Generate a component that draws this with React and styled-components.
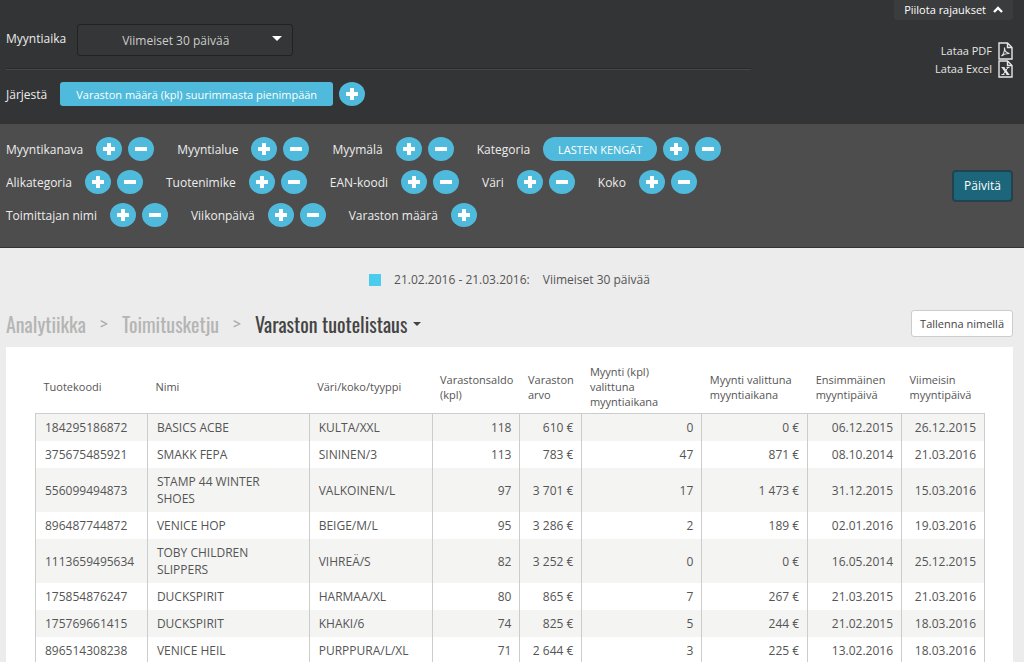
import React from "react";
import styled, { createGlobalStyle, css } from "styled-components";

const sortField = "Varaston määrä (kpl) suurimmasta pienimpään";

const filterRows = [
  [
    { name: "Myyntikanava" },
    { name: "Myyntialue" },
    { name: "Myymälä" },
    { name: "Kategoria", value: "LASTEN KENGÄT" },
  ],
  [
    { name: "Alikategoria" },
    { name: "Tuotenimike" },
    { name: "EAN-koodi" },
    { name: "Väri" },
    { name: "Koko" },
  ],
  [
    { name: "Toimittajan nimi" },
    { name: "Viikonpäivä" },
    { name: "Varaston määrä", addOnly: true },
  ],
];

const columns = [
  { title: "Tuotekoodi", width: 112 },
  { title: "Nimi", width: 162 },
  { title: "Väri/koko/tyyppi", width: 123 },
  { title: "Varastonsaldo (kpl)", width: 88, right: true },
  { title: "Varaston arvo", width: 62, right: true },
  { title: "Myynti (kpl) valittuna myyntiaikana", width: 120, right: true },
  { title: "Myynti valittuna myyntiaikana", width: 106, right: true },
  { title: "Ensimmäinen myyntipäivä", width: 94, right: true },
  { title: "Viimeisin myyntipäivä", width: 83, right: true },
];

const totalWidth = columns.reduce((sum, col) => sum + col.width, 0);

const products = [
  ["184295186872", "BASICS ACBE", "KULTA/XXL", "118", "610 €", "0", "0 €", "06.12.2015", "26.12.2015"],
  ["375675485921", "SMAKK FEPA", "SININEN/3", "113", "783 €", "47", "871 €", "08.10.2014", "21.03.2016"],
  ["556099494873", "STAMP 44 WINTER SHOES", "VALKOINEN/L", "97", "3 701 €", "17", "1 473 €", "31.12.2015", "15.03.2016"],
  ["896487744872", "VENICE HOP", "BEIGE/M/L", "95", "3 286 €", "2", "189 €", "02.01.2016", "19.03.2016"],
  ["1113659495634", "TOBY CHILDREN SLIPPERS", "VIHREÄ/S", "82", "3 252 €", "0", "0 €", "16.05.2014", "25.12.2015"],
  ["175854876247", "DUCKSPIRIT", "HARMAA/XL", "80", "865 €", "7", "267 €", "21.03.2015", "21.03.2016"],
  ["175769661415", "DUCKSPIRIT", "KHAKI/6", "74", "825 €", "5", "244 €", "21.02.2015", "18.03.2016"],
  ["896514308238", "VENICE HEIL", "PURPPURA/L/XL", "71", "2 644 €", "3", "225 €", "13.02.2016", "18.03.2016"],
];

function PlusIcon() {
  return (
    <svg width="12" height="12" viewBox="0 0 12 12" fill="#fff">
      <rect x="4" y="0" width="4" height="12" rx="0.5" />
      <rect x="0" y="4" width="12" height="4" rx="0.5" />
    </svg>
  );
}

function MinusIcon() {
  return (
    <svg width="12" height="12" viewBox="0 0 12 12" fill="#fff">
      <rect x="0" y="4" width="12" height="4" rx="0.5" />
    </svg>
  );
}

function FileIcon({ children }) {
  return (
    <svg width="15" height="18" viewBox="0 0 15 18" fill="none" stroke="#e6e6e6" strokeWidth="1.4">
      <path d="M1 1h8.500L14 5.500V17H1z" />
      <path d="M9.500 1v4.500H14" />
      {children}
    </svg>
  );
}

function Filter({ name, value, addOnly }) {
  return (
    <FilterGroup role="group" aria-label={name}>
      <FilterName>{name}</FilterName>
      {value && <ValuePill type="button">{value}</ValuePill>}
      <RoundButton type="button" aria-label={"Lisää " + name}>
        <PlusIcon />
      </RoundButton>
      {!addOnly && (
        <RoundButton type="button" aria-label={"Poista " + name}>
          <MinusIcon />
        </RoundButton>
      )}
    </FilterGroup>
  );
}

function App() {
  return (
    <>
      <GlobalStyle />
      <TopPanel>
        <TopMain>
          <PeriodRow>
            <Label htmlFor="period">Myyntiaika</Label>
            <SelectWrap>
              <Select id="period" defaultValue="30">
                <option value="30">Viimeiset 30 päivää</option>
              </Select>
              <SelectArrow />
            </SelectWrap>
          </PeriodRow>
          <Divider />
          <SortRow>
            <FilterName>Järjestä</FilterName>
            <SortPill type="button">{sortField}</SortPill>
            <RoundButton type="button" aria-label="Lisää järjestys">
              <PlusIcon />
            </RoundButton>
          </SortRow>
        </TopMain>
        <TopSide>
          <HideButton type="button">
            Piilota rajaukset
            <svg width="10" height="7" viewBox="0 0 10 7" fill="none" stroke="#fff" strokeWidth="2.4">
              <path d="M1 6l4-4 4 4" />
            </svg>
          </HideButton>
          <Downloads>
            <DownloadLink href="#pdf">
              Lataa PDF
              <FileIcon>
                <path d="M3.500 14c1.500-1 3.500-4.500 3-8.500 0 3.500 2 5.500 5 6-3-.3-5.500.5-8 2.500z" strokeWidth="1.1" />
              </FileIcon>
            </DownloadLink>
            <DownloadLink href="#excel">
              Lataa Excel
              <FileIcon>
                <path d="M5 7.500l5 7" strokeWidth="2.200" />
                <path d="M10 7.500l-5 7M3.500 7.500h3M8.500 7.500h3M3.500 14.500h3M8.500 14.500h3" strokeWidth="1" />
              </FileIcon>
            </DownloadLink>
          </Downloads>
        </TopSide>
      </TopPanel>

      <FilterPanel>
        <FilterList>
          {filterRows.map((row) => (
            <FilterRow key={row[0].name}>
              {row.map((filter) => (
                <Filter key={filter.name} {...filter} />
              ))}
            </FilterRow>
          ))}
        </FilterList>
        <UpdateButton type="button">Päivitä</UpdateButton>
      </FilterPanel>

      <Content>
        <Legend>
          <Swatch />
          <span>21.02.2016 - 21.03.2016:</span>
          <span>Viimeiset 30 päivää</span>
        </Legend>

        <TitleBar>
          <Breadcrumb>
            <Crumb href="#analytiikka">Analytiikka</Crumb>
            <Separator>&gt;</Separator>
            <Crumb href="#toimitusketju">Toimitusketju</Crumb>
            <Separator>&gt;</Separator>
            <CurrentPage type="button">
              Varaston tuotelistaus
              <Caret />
            </CurrentPage>
          </Breadcrumb>
          <SaveButton type="button">Tallenna nimellä</SaveButton>
        </TitleBar>

        <Card>
          <Table>
            <colgroup>
              {columns.map((col) => (
                <col key={col.title} style={{ width: (col.width / totalWidth) * 100 + "%" }} />
              ))}
            </colgroup>
            <thead>
              <tr>
                {columns.map((col) => (
                  <Th key={col.title} scope="col">{col.title}</Th>
                ))}
              </tr>
            </thead>
            <tbody>
              {products.map((product) => (
                <Row key={product[0]}>
                  {product.map((value, i) => (
                    <Td key={columns[i].title} $right={columns[i].right}>{value}</Td>
                  ))}
                </Row>
              ))}
            </tbody>
          </Table>
        </Card>
      </Content>
    </>
  );
}

const GlobalStyle = createGlobalStyle`
  * {
    box-sizing: border-box;
  }
  body {
    margin: 0;
    background: #ececec;
    color: #555;
    font-family: "Open Sans", "Noto Sans", sans-serif;
    font-size: 12px;
    line-height: 18px;
  }
  button, select {
    font-family: inherit;
    cursor: pointer;
  }
`;

const TopPanel = styled.header`
  display: flex;
  justify-content: space-between;
  padding: 0 11px 0 6px;
  background: #333435;
  color: #ececec;
`;

const TopMain = styled.div`
  width: 74%;
  padding: 24px 0 18px;
`;

const PeriodRow = styled.div`
  display: flex;
  align-items: center;
  gap: 11px;
`;

const Label = styled.label`
  padding-bottom: 2px;
`;

const SelectWrap = styled.div`
  position: relative;
  width: 216px;
`;

const Select = styled.select`
  appearance: none;
  display: block;
  width: 100%;
  height: 32px;
  padding: 0 40px 0 44px;
  border: 1px solid #222;
  border-radius: 3px;
  background: #353637;
  color: #ccc;
  font-size: 12px;
`;

const triangle = css`
  width: 0;
  height: 0;
  border-left: 5px solid transparent;
  border-right: 5px solid transparent;
`;

const SelectArrow = styled.span`
  ${triangle}
  position: absolute;
  top: 12px;
  right: 11px;
  border-top: 5px solid #fff;
  pointer-events: none;
`;

const Divider = styled.hr`
  height: 2px;
  margin: 12px 0;
  border: 0;
  border-top: 1px solid #28292a;
  border-bottom: 1px solid #484848;
`;

const SortRow = styled.div`
  display: flex;
  align-items: center;
  gap: 6px;
`;

const TopSide = styled.div`
  display: flex;
  flex-direction: column;
  align-items: flex-end;
`;

const HideButton = styled.button`
  display: flex;
  align-items: center;
  gap: 7px;
  height: 20px;
  padding: 0 10px 2px;
  border: 0;
  border-radius: 0 0 3px 3px;
  background: #3b3c3d;
  color: #fff;
  font-size: 11px;
`;

const Downloads = styled.nav`
  display: flex;
  flex-direction: column;
  align-items: flex-end;
  margin-top: 22px;
`;

const DownloadLink = styled.a`
  display: flex;
  align-items: center;
  gap: 6px;
  height: 18px;
  color: #e6e6e6;
  font-size: 11px;
  text-decoration: none;
`;

const FilterPanel = styled.section`
  display: flex;
  align-items: center;
  justify-content: space-between;
  padding: 0 11px 0 6px;
  border-bottom: 1px solid #333;
  background: #4d4d4d;
  color: #ececec;
`;

const FilterList = styled.div`
  display: flex;
  flex-direction: column;
  gap: 9px;
  padding: 13px 0 20px;
`;

const FilterRow = styled.div`
  display: flex;
  flex-wrap: wrap;
  gap: 23px;
`;

const FilterGroup = styled.div`
  display: flex;
  align-items: center;
  gap: 6px;
`;

const FilterName = styled.span`
  padding: 2px 7px 0 0;
`;

const RoundButton = styled.button`
  display: flex;
  align-items: center;
  justify-content: center;
  width: 26px;
  height: 24px;
  padding: 0;
  border: 0;
  border-radius: 50%;
  background: #4fbadb;
`;

const ValuePill = styled.button`
  height: 24px;
  padding: 0 15px;
  border: 0;
  border-radius: 12px;
  background: #4fbadb;
  color: #fff;
  font-size: 11px;
`;

const SortPill = styled(ValuePill)`
  padding: 0 16px;
  border-radius: 3px;
`;

const UpdateButton = styled.button`
  height: 32px;
  padding: 0 10px;
  border: 2px solid #24424d;
  border-radius: 4px;
  background: #1b667a;
  color: #fff;
  font-size: 12px;
`;

const Content = styled.main`
  padding: 23px 11px 0 6px;
`;

const Legend = styled.div`
  display: flex;
  align-items: center;
  justify-content: center;
  gap: 13px;
`;

const Swatch = styled.i`
  width: 12px;
  height: 12px;
  background: #49ccee;
`;

const TitleBar = styled.div`
  display: flex;
  align-items: center;
  justify-content: space-between;
  margin: 21px 0 10px;
`;

const Breadcrumb = styled.nav`
  display: flex;
  align-items: center;
  gap: 14px;
  font-family: Oswald, "Open Sans Condensed", "Liberation Sans Narrow", sans-serif;
  font-size: 20px;
  line-height: 24px;
`;

const Crumb = styled.a`
  color: #b5b5b5;
  text-decoration: none;
`;

const Separator = styled.span`
  color: #aaa;
  font-family: "Open Sans", sans-serif;
  font-size: 14px;
  font-weight: 600;
`;

const CurrentPage = styled.button`
  display: flex;
  align-items: center;
  gap: 6px;
  padding: 0;
  border: 0;
  background: none;
  color: #444;
  font-family: inherit;
  font-size: inherit;
  line-height: inherit;
`;

const Caret = styled.span`
  ${triangle}
  border-width: 4px;
  border-bottom: 0;
  border-top: 4px solid #444;
`;

const SaveButton = styled.button`
  height: 27px;
  padding: 0 8px;
  border: 1px solid #ccc;
  border-radius: 3px;
  background: #fff;
  color: #444;
  font-size: 11px;
`;

const Card = styled.section`
  padding: 13px 28px 24px 29px;
  background: #fff;
`;

const Table = styled.table`
  width: 100%;
  border-collapse: collapse;
  table-layout: fixed;
`;

const Th = styled.th`
  padding: 4px 8px;
  color: #555;
  font-size: 11px;
  font-weight: 400;
  line-height: 15px;
  text-align: left;
  vertical-align: middle;
`;

const Row = styled.tr`
  &:nth-child(odd) {
    background: #f4f4f3;
  }
  &:first-child td {
    border-top: 1px solid #ccc;
  }
`;

const Td = styled.td`
  padding: ${(props) => (props.$right ? "5px 8px" : "5px 12px 5px 9px")};
  border-left: 1px solid #ccc;
  border-right: 1px solid #ccc;
  line-height: 17px;
  text-align: ${(props) => (props.$right ? "right" : "left")};
`;

export default App;
